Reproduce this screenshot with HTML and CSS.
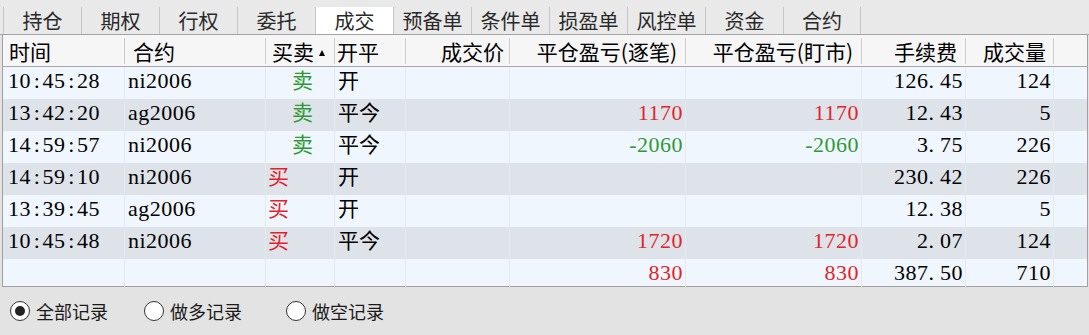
FILE: index.html
```html
<!DOCTYPE html>
<html lang="zh">
<head>
<meta charset="utf-8">
<title>成交</title>
<link rel="stylesheet" href="styles.css">
</head>
<body>
<div class="app">
  <nav class="tabs">
    <div class="tab">持仓</div>
    <div class="tab">期权</div>
    <div class="tab">行权</div>
    <div class="tab">委托</div>
    <div class="tab on">成交</div>
    <div class="tab">预备单</div>
    <div class="tab">条件单</div>
    <div class="tab">损盈单</div>
    <div class="tab">风控单</div>
    <div class="tab">资金</div>
    <div class="tab">合约</div>
  </nav>

  <div class="table">
    <div class="row head">
      <div class="hc h-time">时间</div>
      <div class="hc h-code">合约</div>
      <div class="hc h-side">买卖<span class="tri"></span></div>
      <div class="hc h-oc">开平</div>
      <div class="hc r h-price">成交价</div>
      <div class="hc r h-pl">平仓盈亏(逐笔)</div>
      <div class="hc r h-pl">平仓盈亏(盯市)</div>
      <div class="hc r h-pl">手续费</div>
      <div class="hc r h-vol">成交量</div>
      <div class="hc blank"></div>
    </div>

    <div class="row a">
      <div class="c time">10<span class="hw">:</span>45<span class="hw">:</span>28</div>
      <div class="c code">ni2006</div>
      <div class="c cj sell">卖</div>
      <div class="c cj oc">开</div>
      <div class="c r"></div>
      <div class="c r"></div>
      <div class="c r"></div>
      <div class="c r">126<span class="dot">.</span>45</div>
      <div class="c r">124</div>
      <div class="c blank"></div>
    </div>

    <div class="row b">
      <div class="c time">13<span class="hw">:</span>42<span class="hw">:</span>20</div>
      <div class="c code">ag2006</div>
      <div class="c cj sell">卖</div>
      <div class="c cj oc">平今</div>
      <div class="c r"></div>
      <div class="c r up">1170</div>
      <div class="c r up">1170</div>
      <div class="c r">12<span class="dot">.</span>43</div>
      <div class="c r">5</div>
      <div class="c blank"></div>
    </div>

    <div class="row a">
      <div class="c time">14<span class="hw">:</span>59<span class="hw">:</span>57</div>
      <div class="c code">ni2006</div>
      <div class="c cj sell">卖</div>
      <div class="c cj oc">平今</div>
      <div class="c r"></div>
      <div class="c r down">-2060</div>
      <div class="c r down">-2060</div>
      <div class="c r">3<span class="dot">.</span>75</div>
      <div class="c r">226</div>
      <div class="c blank"></div>
    </div>

    <div class="row b">
      <div class="c time">14<span class="hw">:</span>59<span class="hw">:</span>10</div>
      <div class="c code">ni2006</div>
      <div class="c cj buy">买</div>
      <div class="c cj oc">开</div>
      <div class="c r"></div>
      <div class="c r"></div>
      <div class="c r"></div>
      <div class="c r">230<span class="dot">.</span>42</div>
      <div class="c r">226</div>
      <div class="c blank"></div>
    </div>

    <div class="row a">
      <div class="c time">13<span class="hw">:</span>39<span class="hw">:</span>45</div>
      <div class="c code">ag2006</div>
      <div class="c cj buy">买</div>
      <div class="c cj oc">开</div>
      <div class="c r"></div>
      <div class="c r"></div>
      <div class="c r"></div>
      <div class="c r">12<span class="dot">.</span>38</div>
      <div class="c r">5</div>
      <div class="c blank"></div>
    </div>

    <div class="row b">
      <div class="c time">10<span class="hw">:</span>45<span class="hw">:</span>48</div>
      <div class="c code">ni2006</div>
      <div class="c cj buy">买</div>
      <div class="c cj oc">平今</div>
      <div class="c r"></div>
      <div class="c r up">1720</div>
      <div class="c r up">1720</div>
      <div class="c r">2<span class="dot">.</span>07</div>
      <div class="c r">124</div>
      <div class="c blank"></div>
    </div>

    <div class="row a tot">
      <div class="c time"></div>
      <div class="c code"></div>
      <div class="c cj"></div>
      <div class="c cj"></div>
      <div class="c r"></div>
      <div class="c r up">830</div>
      <div class="c r up">830</div>
      <div class="c r">387<span class="dot">.</span>50</div>
      <div class="c r">710</div>
      <div class="c blank"></div>
    </div>
  </div>

  <div class="footer">
    <label class="opt"><span class="radio on"></span>全部记录</label>
    <label class="opt"><span class="radio"></span>做多记录</label>
    <label class="opt"><span class="radio"></span>做空记录</label>
  </div>
</div>
</body>
</html>
```

FILE: styles.css
```css
html, body {
  margin: 0;
  padding: 0;
}
body {
  width: 1089px;
  height: 335px;
  overflow: hidden;
  background: #e3e3e3;
  font-family: "Noto Sans CJK SC", sans-serif;
  color: #000;
}

/* tab strip */
.tabs {
  display: flex;
  height: 27px;
  padding: 7px 0 0 3px;
  background: #e9e9e9;
  border-bottom: 1px solid #a3a3a3;
}
.tab {
  width: 78px;
  box-sizing: border-box;
  border-left: 1px solid #c6c6c6;
  font-size: 20px;
  line-height: 27px;
  color: #2a2a2a;
  text-align: center;
  white-space: nowrap;
}
.tab:last-child {
  border-right: 1px solid #c6c6c6;
}
.tab.on {
  background: #fff;
}

/* grid table */
.table {
  margin-left: 2px;
  width: 1086px;
  box-sizing: border-box;
  border-left: 1px solid #a0a0a0;
  border-right: 1px solid #a0a0a0;
  border-bottom: 1px solid #a0a0a0;
}
.row {
  display: grid;
  grid-template-columns: 122px 141px 69px 71px 104px 176px 176px 104px 88px 1fr;
  height: 32px;
  box-sizing: border-box;
}
.row.a { background: #f0f6fd; }
.row.b { background: #dee3ea; }
.row.tot { height: 27px; }

.head {
  background: #f6f6f6;
  border-bottom: 1px solid #a8a8a8;
}
.hc {
  margin: 3px 0 2px;
  box-sizing: border-box;
  border-right: 1px solid #cdcdcd;
  font-size: 21px;
  line-height: 26px;
  white-space: nowrap;
}
.hc.blank { border-right: 0; }
.h-time { padding-left: 6px; }
.h-code { padding-left: 8px; }
.h-side { padding-left: 6px; }
.h-oc { padding-left: 2px; }
.h-price { padding-right: 5px; }
.h-pl { padding-right: 8px; }
.h-vol { padding-right: 7px; }
.r { text-align: right; }

.tri {
  display: inline-block;
  width: 0;
  height: 0;
  margin-left: 5px;
  vertical-align: 4px;
  border-left: 3.5px solid transparent;
  border-right: 3.5px solid transparent;
  border-bottom: 6px solid #000;
}

/* data cells */
.c {
  box-sizing: border-box;
  border-right: 1px solid #e4e9ef;
  font-family: "Liberation Serif", serif;
  font-size: 22px;
  line-height: 28px;
  letter-spacing: 0.5px;
  padding: 0 2px 0 3px;
  white-space: nowrap;
}
.c.blank { border-right: 0; }
.c.time { padding-left: 5px; }
.c.code { padding-left: 3px; }
.cj {
  font-family: "Noto Sans CJK SC", sans-serif;
  font-size: 21px;
  line-height: 24px;
  letter-spacing: 0;
}
.sell { padding-left: 26px; color: #2f9a35; }
.buy { padding-left: 2px; color: #e3232b; }
.oc { padding-left: 3px; }
.up { color: #e3232b; }
.down { color: #2f9a35; }

.hw {
  display: inline-block;
  width: 11.5px;
  text-align: center;
  letter-spacing: 0;
}
.dot {
  display: inline-block;
  width: 11.5px;
  text-align: left;
  letter-spacing: 0;
}

/* footer radios */
.footer {
  display: flex;
  align-items: center;
  height: 48px;
  padding-left: 10px;
}
.opt {
  display: flex;
  align-items: center;
  gap: 6px;
  font-size: 18px;
  color: #1a1a1a;
  white-space: nowrap;
}
.opt:nth-child(1) { width: 134px; }
.opt:nth-child(2) { width: 142px; }
.radio {
  width: 20px;
  height: 20px;
  box-sizing: border-box;
  border: 1px solid #333;
  border-radius: 50%;
  background: #fff;
  display: flex;
  align-items: center;
  justify-content: center;
}
.radio.on::after {
  content: "";
  width: 10px;
  height: 10px;
  border-radius: 50%;
  background: #222;
}
```
